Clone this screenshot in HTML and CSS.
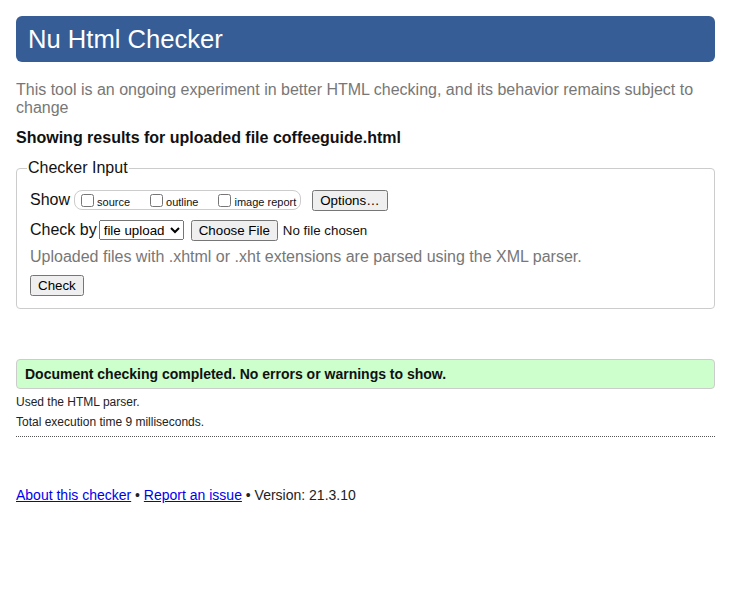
FILE: index.html
```html
<!DOCTYPE html>
<html lang="en">
<head>
<meta charset="utf-8">
<title>Nu Html Checker</title>
<link rel="stylesheet" href="styles.css">
</head>
<body>
<h1 class="title">Nu Html Checker</h1>
<p class="intro">This tool is an ongoing experiment in better HTML checking, and its behavior remains subject to change</p>
<h2 class="showing">Showing results for uploaded file coffeeguide.html</h2>
<fieldset class="input-box">
  <legend class="legend">Checker Input</legend>
  <div class="row row-show">
    <span class="row-label">Show</span>
    <span class="opts">
      <label class="opt"><input type="checkbox" class="cb"><span>source</span></label>
      <label class="opt"><input type="checkbox" class="cb"><span>outline</span></label>
      <label class="opt opt-last"><input type="checkbox" class="cb"><span>image report</span></label>
    </span>
    <button class="btn btn-options" type="button">Options…</button>
  </div>
  <div class="row row-check">
    <span class="row-label">Check by</span>
    <select class="sel"><option>file upload</option></select>
    <input class="file" type="file">
  </div>
  <p class="note">Uploaded files with .xhtml or .xht extensions are parsed using the XML parser.</p>
  <div class="row row-submit">
    <button class="btn" type="button">Check</button>
  </div>
</fieldset>
<div class="success">Document checking completed. No errors or warnings to show.</div>
<div class="details">
  <p class="detail">Used the HTML parser.</p>
  <p class="detail">Total execution time 9 milliseconds.</p>
</div>
<p class="footer"><a href="#">About this checker</a> • <a href="#">Report an issue</a> • Version: 21.3.10</p>
</body>
</html>
```
FILE: styles.css
```css
html, body {
  margin: 0;
  background: #fff;
}
body {
  padding: 16px 15px 16px 16px;
  font-family: "Liberation Sans", Arial, sans-serif;
  font-size: 16px;
  color: #111;
}
.title {
  margin: 0;
  background: #365d95;
  color: #fff;
  border-radius: 6px;
  padding: 8px 12px;
  font-size: 25.6px;
  line-height: 30px;
  font-weight: normal;
}
.intro {
  margin: 19px 0 0;
  line-height: 18px;
  color: #777;
}
.showing {
  margin: 12px 0 0;
  font-size: 16px;
  line-height: 18px;
  font-weight: bold;
  color: #111;
}
.input-box {
  margin: 12px 0 0;
  padding: 12px 13px 12px;
  border: 1px solid #ccc;
  border-radius: 4px;
  min-width: 0;
}
.legend {
  padding: 0 1px;
  margin-left: -3px;
  line-height: 18px;
  color: #111;
}
.row {
  display: flex;
  align-items: center;
  height: 22px;
}
.row-label {
  margin-right: 4px;
}
.opts {
  display: inline-flex;
  align-items: center;
  height: 18px;
  border: 1px solid #ccc;
  border-radius: 8px;
  padding: 0 4px 0 2px;
}
.opt {
  display: inline-flex;
  align-items: center;
  font-size: 11px;
  margin-right: 16px;
}
.opt span {
  position: relative;
  top: 2px;
}
.opt-last {
  margin-right: 0;
}
.cb {
  margin: 0 3px 0 4px;
  width: 13px;
  height: 13px;
}
.btn {
  font-family: "Liberation Sans", Arial, sans-serif;
  font-size: 13.33px;
  height: 21px;
  padding: 1px 6px;
}
.btn-options {
  margin-left: 11px;
}
.row-check {
  margin-top: 8px;
}
.sel {
  margin-left: -2px;
  width: 85px;
  font-family: "Liberation Sans", Arial, sans-serif;
  font-size: 13.33px;
  height: 20px;
}
.file {
  margin-left: 7px;
  font-family: "Liberation Sans", Arial, sans-serif;
  font-size: 13.33px;
}
.file::file-selector-button {
  padding: 1px 6px;
  margin-right: 5px;
  height: 21px;
}
.note {
  margin: 7px 0 0;
  line-height: 18px;
  color: #777;
}
.row-submit {
  margin-top: 8px;
}
.success {
  margin-top: 50px;
  background: #ccffcc;
  border: 1px solid #ccc;
  border-radius: 4px;
  padding: 0 8px;
  line-height: 28px;
  font-size: 14px;
  font-weight: bold;
  color: #111;
}
.details {
  margin-top: 3px;
  padding-bottom: 4px;
  border-bottom: 1px dotted #555;
}
.detail {
  margin: 0;
  font-size: 12px;
  line-height: 20px;
  color: #222;
}
.footer {
  margin: 50px 0 0;
  font-size: 14px;
  line-height: 16px;
  color: #222;
}
.footer a {
  color: #0000ee;
}
```
